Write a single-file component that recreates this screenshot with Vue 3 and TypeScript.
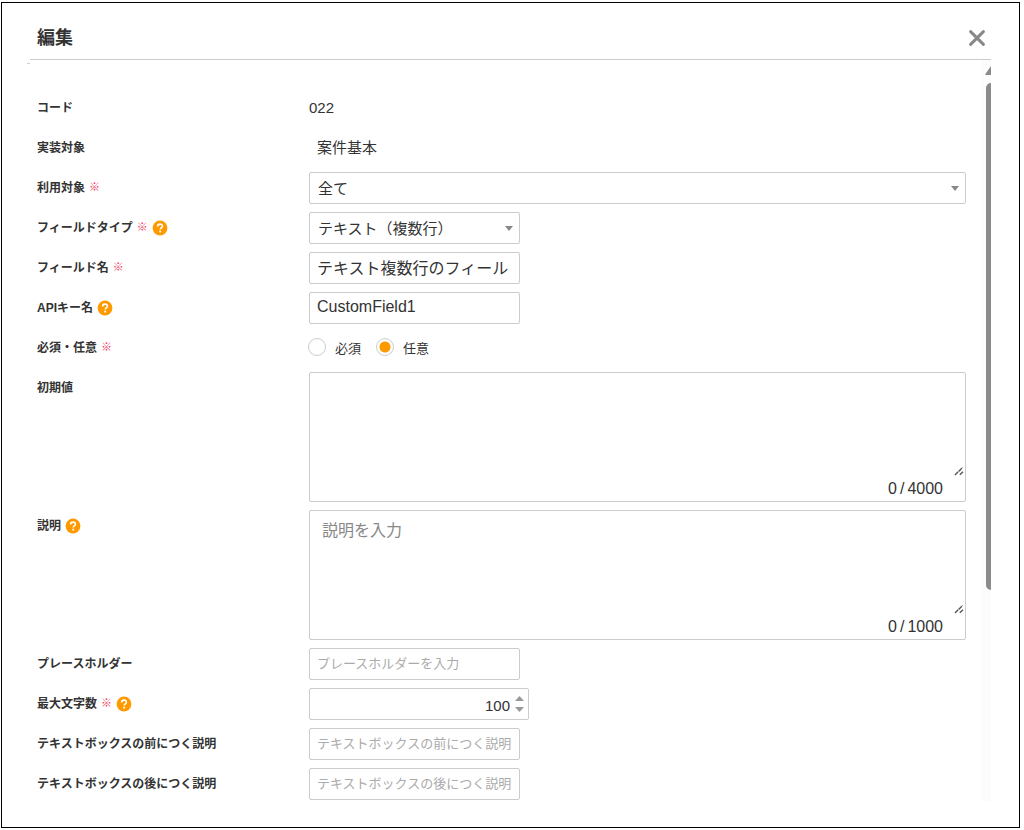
<script setup lang="ts">
import { ref } from 'vue'

interface Row {
  id: string
  label: string
  kind: 'code' | 'text' | 'select' | 'input' | 'radio' | 'area' | 'number'
  required?: boolean
  help?: boolean
  wide?: boolean
  placeholder?: string
  max?: number
}

const rows: Row[] = [
  { id: 'code', label: 'コード', kind: 'code' },
  { id: 'target', label: '実装対象', kind: 'text' },
  { id: 'usage', label: '利用対象', kind: 'select', required: true, wide: true },
  { id: 'type', label: 'フィールドタイプ', kind: 'select', required: true, help: true },
  { id: 'name', label: 'フィールド名', kind: 'input', required: true },
  { id: 'apiKey', label: 'APIキー名', kind: 'input', help: true },
  { id: 'need', label: '必須・任意', kind: 'radio', required: true },
  { id: 'initial', label: '初期値', kind: 'area', max: 4000 },
  { id: 'description', label: '説明', kind: 'area', help: true, placeholder: '説明を入力', max: 1000 },
  { id: 'placeholder', label: 'プレースホルダー', kind: 'input', placeholder: 'プレースホルダーを入力' },
  { id: 'maxLength', label: '最大文字数', kind: 'number', required: true, help: true },
  { id: 'before', label: 'テキストボックスの前につく説明', kind: 'input', placeholder: 'テキストボックスの前につく説明' },
  { id: 'after', label: 'テキストボックスの後につく説明', kind: 'input', placeholder: 'テキストボックスの後につく説明' },
]

const options: Record<string, string[]> = {
  usage: ['全て'],
  type: ['テキスト（複数行）'],
}

const values = ref<Record<string, string>>({
  code: '022',
  target: '案件基本',
  usage: '全て',
  type: 'テキスト（複数行）',
  name: 'テキスト複数行のフィールド',
  apiKey: 'CustomField1',
  need: '任意',
  initial: '',
  description: '',
  placeholder: '',
  before: '',
  after: '',
})
const maxLength = ref(100)
</script>

<template>
  <main class="dialog">
    <header class="head">
      <h1>編集</h1>
      <button class="close" type="button" aria-label="閉じる">
        <svg viewBox="0 0 18 18" width="18" height="18"><path d="M2.6 2.6 15.4 15.4M15.4 2.6 2.6 15.4" fill="none" stroke="#888" stroke-width="3" stroke-linecap="round" /></svg>
      </button>
    </header>
    <div class="body">
      <span class="tick"></span>
      <form class="form" @submit.prevent>
        <div v-for="row in rows" :key="row.id" class="row">
          <div class="caption">
            <span v-if="row.kind === 'code' || row.kind === 'text' || row.kind === 'radio'" :id="row.id + '-label'">{{ row.label }}</span>
            <label v-else :for="row.id">{{ row.label }}</label>
            <span v-if="row.required" class="required">※</span>
            <button v-if="row.help" class="help" type="button" :aria-label="row.label + 'のヘルプ'">
              <svg viewBox="0 0 16 16" width="16" height="16">
                <circle cx="8" cy="8" r="7.4" fill="#f90" />
                <path d="M5.6 6.500C5.6 4.900 6.600 4.100 8 4.100s2.400.8 2.400 2.100c0 1.600-2.200 1.700-2.200 3.400" fill="none" stroke="#fff" stroke-width="1.6" />
                <rect x="7.3" y="10.700" width="1.8" height="1.800" fill="#fff" />
              </svg>
            </button>
          </div>

          <output v-if="row.kind === 'code'" class="static">{{ values[row.id] }}</output>
          <output v-else-if="row.kind === 'text'" class="static indent">{{ values[row.id] }}</output>

          <div v-else-if="row.kind === 'select'" class="select" :class="{ wide: row.wide }">
            <select :id="row.id" v-model="values[row.id]">
              <option v-for="o in options[row.id]" :key="o">{{ o }}</option>
            </select>
            <svg class="arrow" viewBox="0 0 8 5" width="8" height="5"><path d="M0 0h8L4 5z" fill="#888" /></svg>
          </div>

          <input v-else-if="row.kind === 'input'" :id="row.id" v-model="values[row.id]" class="box" type="text" :placeholder="row.placeholder" />

          <div v-else-if="row.kind === 'radio'" class="radios" role="radiogroup" :aria-labelledby="row.id + '-label'">
            <label v-for="o in ['必須', '任意']" :key="o"><input v-model="values[row.id]" type="radio" :name="row.id" :value="o" />{{ o }}</label>
          </div>

          <div v-else-if="row.kind === 'area'" class="area">
            <textarea :id="row.id" v-model="values[row.id]" :placeholder="row.placeholder" :maxlength="row.max"></textarea>
            <svg class="grip" viewBox="0 0 10 10" width="10" height="10"><path d="M1 9 8.6 1.4M5.8 8.8 9.3 5.4" fill="none" stroke="#555" stroke-width="1.4" stroke-dasharray="4.5 .6" /></svg>
            <div class="count">
              <span>{{ values[row.id].length }}</span><span>/</span><span>{{ row.max }}</span>
            </div>
          </div>

          <div v-else class="number">
            <input :id="row.id" v-model.number="maxLength" type="number" />
            <div class="spin">
              <button type="button" aria-label="増やす" @click="maxLength++"><svg viewBox="0 0 9 5" width="9" height="5"><path d="M0 5h9L4.500 0z" fill="#999" /></svg></button>
              <button type="button" aria-label="減らす" @click="maxLength--"><svg viewBox="0 0 9 5" width="9" height="5"><path d="M0 0h9L4.500 5z" fill="#999" /></svg></button>
            </div>
          </div>
        </div>
      </form>
      <div class="scrollbar">
        <svg viewBox="0 0 6 9" width="6" height="9"><path d="M6 0v9H1Q0 9 .4 8z" fill="#8a8a8a" /></svg>
        <div class="thumb"></div>
      </div>
    </div>
  </main>
</template>

<style>
body {
  background: #fff;
}
</style>

<style scoped>
* {
  box-sizing: border-box;
}
.dialog {
  margin: 2px 4px 2px 1px;
  padding: 0 28px 26px 25px;
  border: 1px solid #000;
  background: #fff;
  color: #333;
  font-family: "Liberation Sans", "Noto Sans CJK JP", sans-serif;
  font-size: 15px;
}
button {
  padding: 0;
  border: 0;
  background: none;
  cursor: pointer;
}
svg {
  display: block;
}
.head {
  display: flex;
  align-items: center;
  justify-content: space-between;
  height: 57px;
  margin-left: 3px;
  padding: 13px 5px 0 7px;
  border-bottom: 1px solid #ccc;
}
h1 {
  margin: 0;
  font-size: 18px;
  line-height: 24px;
}
.body {
  position: relative;
  display: flex;
}
.tick {
  position: absolute;
  top: 3px;
  left: 0;
  width: 3px;
  height: 1px;
  background: #ccc;
}
.form {
  display: grid;
  flex: 1;
  gap: 8px;
  min-width: 0;
  padding: 32px 16px 1px 10px;
}
.row {
  display: grid;
  grid-template-columns: 272px 1fr;
  align-items: start;
}
.caption {
  display: flex;
  align-items: center;
  height: 28px;
  font-size: 12px;
  font-weight: 700;
}
.required {
  margin-left: 4px;
  color: #f03a60;
  font-size: 11px;
}
.help {
  margin: 4px 0 0 4px;
}
.static {
  line-height: 32px;
}
.indent {
  padding-left: 8px;
}
input,
select,
textarea {
  margin: 0;
  color: #333;
  font-family: inherit;
  outline: 0;
}
.box,
.select,
.area,
.number {
  border: 1px solid #ccc;
  border-radius: 2px;
  background: #fff;
}
.box {
  width: 211px;
  height: 32px;
  padding: 0 7px 2px;
  font-size: 16px;
}
.box::placeholder {
  color: #aaa;
  font-size: 13px;
}
.select {
  position: relative;
  width: 211px;
  height: 32px;
}
.wide {
  width: 100%;
}
.select select {
  display: block;
  width: 100%;
  height: 30px;
  padding: 0 24px 0 8px;
  border: 0;
  appearance: none;
  background: none;
  font-size: 15px;
}
.arrow {
  position: absolute;
  top: 13px;
  right: 6px;
  pointer-events: none;
}
.radios {
  display: flex;
  gap: 15px;
  height: 32px;
  margin-left: -1px;
  padding-bottom: 2px;
  font-size: 13px;
}
.radios label {
  display: flex;
  align-items: center;
  gap: 9px;
}
.radios input {
  width: 18px;
  height: 18px;
  border: 1px solid #ccc;
  border-radius: 50%;
  appearance: none;
  background: #fff;
}
.radios input:checked {
  background: radial-gradient(circle, #f90 5px, #fff 6px);
}
.area {
  position: relative;
  height: 130px;
}
textarea {
  display: block;
  width: 100%;
  height: 104px;
  padding: 6px 12px;
  border: 0;
  background: none;
  font-size: 16px;
  resize: none;
}
textarea::placeholder {
  color: #888;
}
.grip {
  position: absolute;
  right: 1px;
  top: 93px;
}
.count {
  display: flex;
  justify-content: flex-end;
  gap: 3px;
  padding-right: 22px;
  font-size: 16px;
  line-height: 24px;
}
.number {
  display: flex;
  align-items: center;
  width: 220px;
  height: 32px;
  padding-right: 4px;
}
.number input {
  flex: 1;
  min-width: 0;
  height: 30px;
  padding: 2px 5px 0 7px;
  border: 0;
  appearance: textfield;
  background: none;
  font-size: 15px;
  text-align: right;
}
.number input::-webkit-inner-spin-button {
  display: none;
}
.spin {
  display: grid;
  gap: 6px;
}
.scrollbar {
  width: 9px;
  padding: 6px 0 0 3px;
  overflow: hidden;
  background: #fcfcfc;
}
.thumb {
  width: 10px;
  height: 69%;
  margin: 8px 0 0 1px;
  border-radius: 5px;
  background: #8a8a8a;
}
</style>
